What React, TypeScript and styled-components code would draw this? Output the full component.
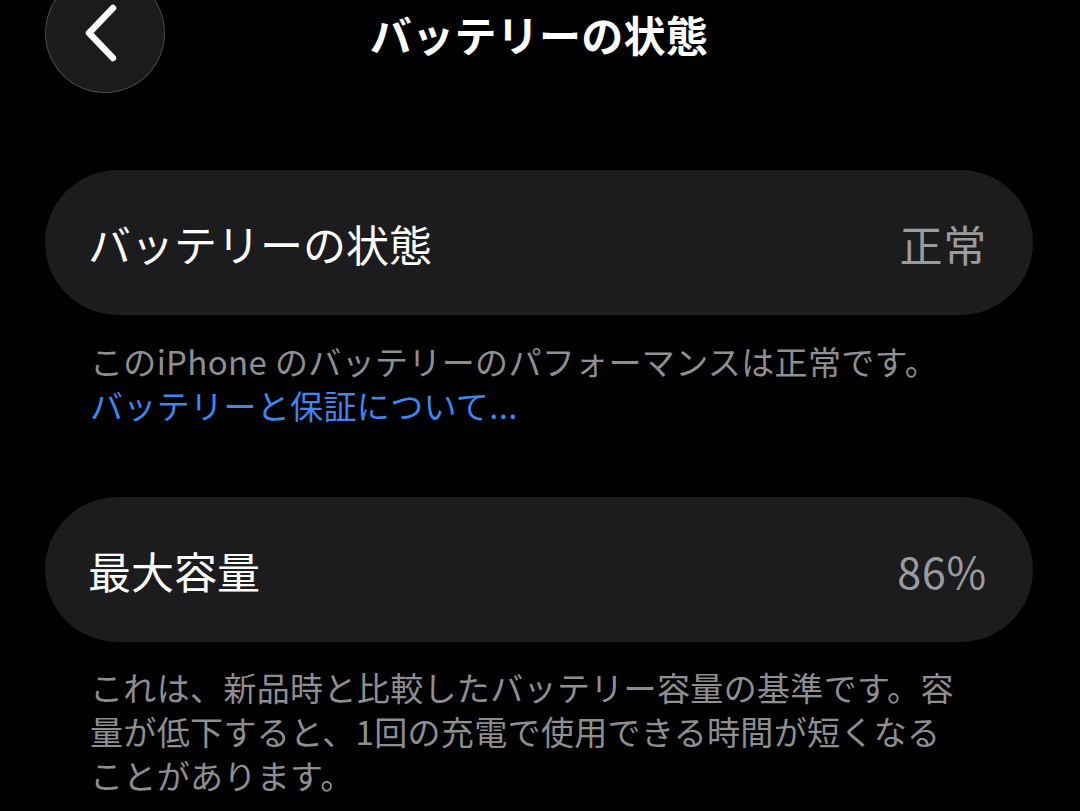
import React from 'react'
import styled, { createGlobalStyle } from 'styled-components'

const GlobalStyle = createGlobalStyle`
  html, body {
    margin: 0;
    padding: 0;
    background: #000;
  }
  body {
    font-family: "Noto Sans CJK JP", "Noto Sans", sans-serif;
    color: #fff;
    -webkit-font-smoothing: antialiased;
  }
`

const Page = styled.main`
  min-height: 811px;
  padding: 0 47px 0 45px;
  background: #000;
  overflow: hidden;
`

const NavBar = styled.header`
  display: grid;
  grid-template-columns: 1fr auto 1fr;
  grid-template-rows: 66px;
  align-items: center;
  margin-bottom: 104px;
`

const BackButton = styled.button`
  width: 120px;
  height: 120px;
  margin: -27px 0;
  padding: 0 8px 0 0;
  border-radius: 50%;
  background: #1b1b1c;
  border: 1.5px solid rgba(255, 255, 255, 0.2);
  display: flex;
  align-items: center;
  justify-content: center;
  justify-self: start;
  cursor: pointer;
`

const Title = styled.h1`
  margin: 0;
  font-size: 42px;
  font-weight: 700;
  letter-spacing: 0.3px;
  color: #fff;
`

const Card = styled.section`
  height: 145px;
  border-radius: 73px;
  background: #1c1c1e;
  display: flex;
  align-items: center;
  justify-content: space-between;
  padding: 0 46px 0 43px;
`

const Label = styled.span`
  font-size: 43px;
  color: #fff;
`

const Value = styled.span`
  font-size: 43px;
  letter-spacing: 0.8px;
  color: #9a9a9f;
`

const Footnote = styled.p<{ $top?: number; $gap?: number }>`
  margin: ${p => p.$top ?? 24}px 0 ${p => p.$gap ?? 0}px;
  padding: 0 30px 0 45px;
  font-size: 33px;
  letter-spacing: 0.35px;
  line-height: 44px;
  white-space: nowrap;
  color: #8e8e93;
`

const Link = styled.a`
  display: block;
  color: #3f86ee;
  text-decoration: none;
`

function Chevron() {
  return (
    <svg width="40" height="58" viewBox="0 0 40 58" fill="none">
      <path
        d="M32 4 L8 29 L32 54"
        stroke="#fff"
        strokeWidth="6.5"
        strokeLinecap="round"
        strokeLinejoin="round"
      />
    </svg>
  )
}

export default function App() {
  return (
    <>
      <GlobalStyle />
      <Page>
        <NavBar>
          <BackButton aria-label="戻る">
            <Chevron />
          </BackButton>
          <Title>バッテリーの状態</Title>
          <span />
        </NavBar>

        <Card>
          <Label>バッテリーの状態</Label>
          <Value>正常</Value>
        </Card>
        <Footnote $gap={70}>
          このiPhone のバッテリーのパフォーマンスは正常です。
          <Link href="#">バッテリーと保証について...</Link>
        </Footnote>

        <Card>
          <Label>最大容量</Label>
          <Value>86%</Value>
        </Card>
        <Footnote $top={23}>
          これは、新品時と比較したバッテリー容量の基準です。容
          <br />
          量が低下すると、1回の充電で使用できる時間が短くなる
          <br />
          ことがあります。
        </Footnote>
      </Page>
    </>
  )
}
